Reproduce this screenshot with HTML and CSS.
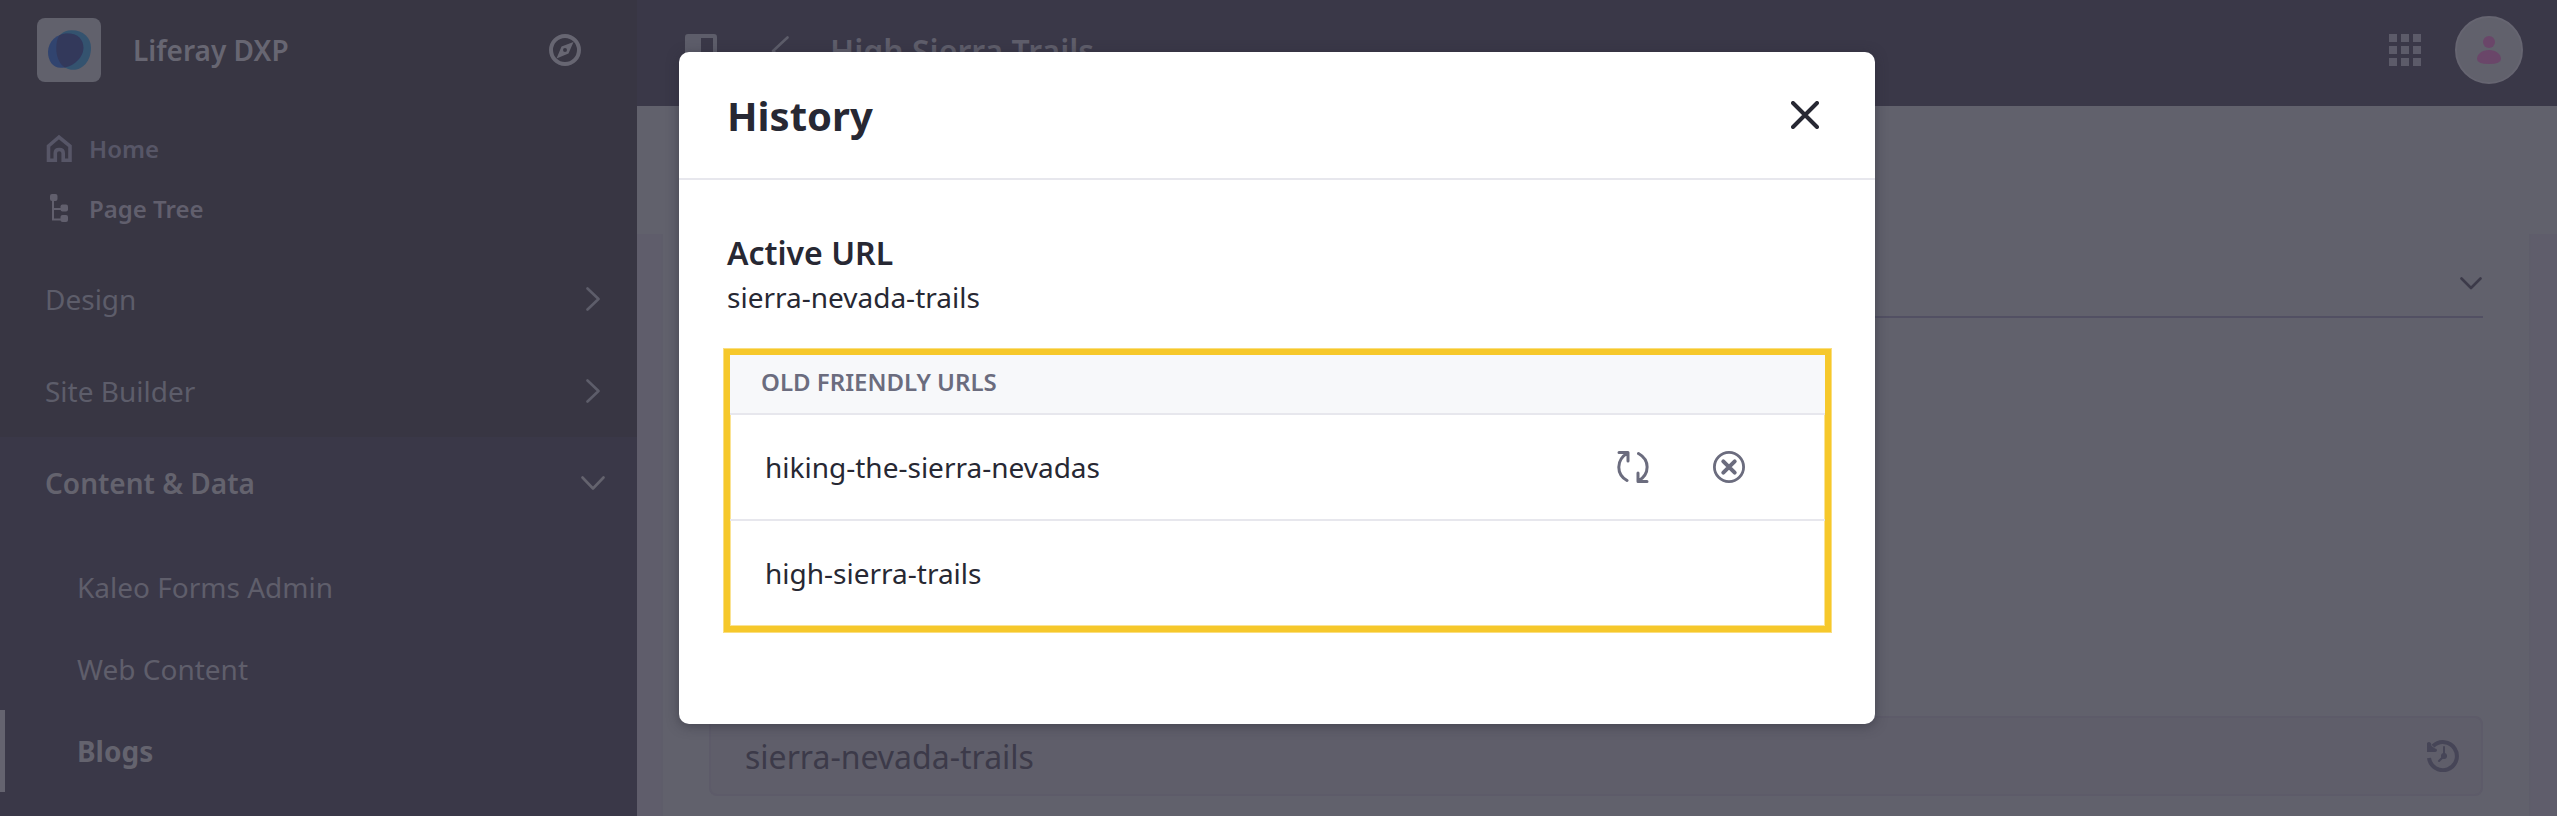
FILE: index.html
```html
<!DOCTYPE html>
<html lang="en">
<head>
<meta charset="utf-8">
<title>Liferay DXP</title>
<link rel="stylesheet" href="styles.css">
</head>
<body>
<div class="app">
  <aside class="sidebar">
    <div class="brand">
      <span class="brand-logo">
        <svg width="43" height="40" viewBox="0 0 130 120"><path class="blob-teal" d="M72 0C106 0 130 22 130 53C130 92 106 120 75 120C45 120 25 88 25 54C25 20 40 0 72 0Z"/><path class="blob-blue" d="M60 10C90 10 107 28 107 54C107 84 74 114 38 114C14 114 0 92 0 66C0 34 26 10 60 10Z"/><path class="blob-mix" d="M34 16C42 12 50 10 60 10C90 10 107 28 107 54C107 80 82 106 51 113C34 102 25 80 25 54C25 38 28 25 34 16Z"/></svg>
      </span>
      <span class="brand-name">Liferay DXP</span>
      <svg class="compass" width="32" height="32" viewBox="0 0 32 32"><circle cx="16" cy="16" r="14" fill="none" stroke="currentColor" stroke-width="4"/><path fill="currentColor" fill-rule="evenodd" d="M24.500 8L12.500 12.500L7.500 24.500L19.500 19.500ZM16 14a2 2 0 1 1 0 4a2 2 0 1 1 0-4Z"/></svg>
    </div>
    <nav class="quick">
      <a class="quick-link home"><svg width="26" height="28" viewBox="0 0 26 28" fill="none" stroke="currentColor" stroke-width="3.600" stroke-linejoin="round"><path stroke-linejoin="miter" d="M2.500 12L13 3L24 12V26.200H17.200V19Q17.200 15.500 13.200 15.500Q9.300 15.500 9.300 19V26.200H2.500Z"/></svg><span>Home</span></a>
      <a class="quick-link"><svg width="26" height="28" viewBox="0 0 26 28"><path d="M7 4V25.500H17M7 15H17" fill="none" stroke="currentColor" stroke-width="2"/><g fill="currentColor"><rect x="4" width="7.500" height="7" rx="2"/><rect x="14.500" y="10.500" width="7.500" height="7" rx="2"/><rect x="14.500" y="21" width="7.500" height="7" rx="2"/></g></svg><span>Page Tree</span></a>
    </nav>
    <nav class="groups">
      <a class="group"><span>Design</span><svg width="14" height="24" viewBox="0 0 14 24"><path class="line" d="M1.500 1.500L12.500 12L1.500 22.500"/></svg></a>
      <a class="group"><span>Site Builder</span><svg width="14" height="24" viewBox="0 0 14 24"><path class="line" d="M1.500 1.500L12.500 12L1.500 22.500"/></svg></a>
    </nav>
    <div class="expanded">
      <a class="group open"><span>Content &amp; Data</span><svg width="24" height="14" viewBox="0 0 24 14"><path class="line" d="M1.500 1.500L12 12.500L22.500 1.500"/></svg></a>
      <nav class="items">
        <a class="item">Kaleo Forms Admin</a>
        <a class="item">Web Content</a>
        <a class="item active">Blogs</a>
      </nav>
    </div>
  </aside>
  <div class="page">
    <header class="topbar">
      <svg class="panel-icon" width="32" height="32" viewBox="0 0 32 32"><path fill="currentColor" fill-rule="evenodd" d="M3 0H29Q32 0 32 3V29Q32 32 29 32H3Q0 32 0 29V3Q0 0 3 0ZM16 4V28H28V4Z"/></svg>
      <svg class="back" width="18" height="30" viewBox="0 0 18 30"><path class="line" d="M16.500 2.500L2 16L16.500 29"/></svg>
      <span class="page-title">High Sierra Trails</span>
      <svg class="apps" width="32" height="32" viewBox="0 0 32 32" fill="currentColor"><path d="M0 0h8v8H0zM12 0h8v8h-8zM24 0h8v8h-8zM0 12h8v8H0zM12 12h8v8h-8zM24 12h8v8h-8zM0 24h8v8H0zM12 24h8v8h-8zM24 24h8v8h-8z"/></svg>
      <span class="avatar"><svg width="24" height="28" viewBox="0 0 24 28" fill="currentColor"><circle cx="12" cy="6" r="6"/><path d="M12 14C19 14 24 18 24 23Q24 28 12 28Q0 28 0 23C0 18 5 14 12 14Z"/></svg></span>
    </header>
    <main class="content">
      <section class="sheet">
        <div class="section-head"><svg width="22" height="13" viewBox="0 0 22 13"><path class="line" d="M1.500 1.500L11 11L20.500 1.500"/></svg></div>
        <div class="url-field">
          <span>sierra-nevada-trails</span>
          <svg width="32" height="32" viewBox="0 0 32 32"><path d="M2 18A14 14 0 1 0 6 6.200" fill="none" stroke="currentColor" stroke-width="4"/><path fill="currentColor" d="M0 3.500Q0 2 2 2Q3.500 2 4 3.500L4.500 6L8 8.500Q10 8.500 10 10.200Q10 12 8 12H0Z"/><path d="M17 7V16L12 21" fill="none" stroke="currentColor" stroke-width="2" stroke-linecap="round"/><circle cx="17" cy="16" r="3" fill="currentColor"/></svg>
        </div>
      </section>
    </main>
  </div>
</div>
<div class="modal" role="dialog">
  <header class="modal-header">
    <h1>History</h1>
    <svg width="28" height="28" viewBox="0 0 28 28"><path d="M2 2L26 26M26 2L2 26" stroke="currentColor" stroke-width="4" stroke-linecap="round"/></svg>
  </header>
  <div class="modal-body">
    <h2>Active URL</h2>
    <p class="active-url">sierra-nevada-trails</p>
    <div class="url-list">
      <div class="list-head">OLD FRIENDLY URLS</div>
      <div class="list-row">
        <span>hiking-the-sierra-nevadas</span>
        <span class="actions">
          <svg width="32" height="32" viewBox="0 0 32 32" fill="none" stroke="currentColor" stroke-width="3" stroke-linecap="round" stroke-linejoin="round"><path d="M2 1.500H11V10M10.500 2C-1 9-1 23 10 29.500M21.500 2.500C33 9 33 23 21.500 30M21 22V30.500H30"/></svg>
          <svg width="32" height="32" viewBox="0 0 32 32" fill="none" stroke="currentColor" stroke-linecap="round"><circle cx="16" cy="16" r="14.600" stroke-width="2.800"/><path d="M10.300 10.300L21.700 21.700M21.700 10.300L10.300 21.700" stroke-width="4"/></svg>
        </span>
      </div>
      <div class="list-row">
        <span>high-sierra-trails</span>
      </div>
    </div>
  </div>
</div>
</body>
</html>
```

FILE: styles.css
```css
* { box-sizing: border-box; }
body {
  margin: 0;
  height: 816px;
  overflow: hidden;
  font-family: "Noto Sans", "Open Sans", sans-serif;
  font-size: 28px;
  color: #272833;
}
svg { display: block; flex: none; }
.line { fill: none; stroke: currentColor; stroke-width: 2.6; stroke-linecap: round; stroke-linejoin: round; }
.app { display: flex; height: 816px; background: #61616c; }
.sidebar {
  width: 637px;
  flex: none;
  display: flex;
  flex-direction: column;
  background: #383643;
  color: #5d5d6a;
}
.brand { display: flex; align-items: center; height: 100px; padding: 0 56px 0 37px; color: #676672; }
.brand-logo {
  width: 64px;
  height: 64px;
  border-radius: 8px;
  background: #61616c;
  display: flex;
  align-items: center;
  justify-content: center;
}
.blob-teal { fill: #34536f; }
.blob-blue { fill: #31446f; }
.blob-mix { fill: #33395b; }
.brand-name { margin-left: 32px; font-weight: 600; font-size: 28px; }
.compass { margin-left: auto; }
.quick { padding: 18px 0 0 46px; display: flex; flex-direction: column; }
.quick-link { display: flex; align-items: center; gap: 17px; height: 60px; font-size: 24px; font-weight: 600; color: #615f6d; }
.quick-link.home { color: #575667; }
.groups { padding-top: 15px; }
.group { display: flex; align-items: center; justify-content: space-between; height: 92px; padding: 0 37px 0 45px; }
.expanded { flex: 1; background: #3a3848; }
.group.open { padding-right: 32px; font-weight: 600; color: #64636e; }
.items { padding-top: 17px; }
.item { display: flex; align-items: center; height: 82px; padding-left: 77px; color: #5f5e6b; }
.item.active { padding-left: 73px; border-left: 5px solid #64636f; padding-left: 72px; font-weight: 700; color: #64636e; }
.page { flex: 1; display: flex; flex-direction: column; min-width: 0; }
.topbar {
  height: 106px;
  display: flex;
  align-items: center;
  padding: 0 34px 6px 48px;
  background: #3a3848;
  color: #5d5d6a;
}
.back { margin-left: 54px; }
.page-title { margin-left: 41px; font-size: 32px; font-weight: 600; color: #5f5e6b; }
.apps { margin-left: auto; color: #5c5b69; }
.avatar {
  margin-left: 34px;
  width: 68px;
  height: 68px;
  border-radius: 50%;
  border: 2px solid #666571;
  background: #61616c;
  color: #6a4669;
  display: flex;
  align-items: center;
  justify-content: center;
}
.content { flex: 1; margin-top: 128px; padding: 0 26px 0 24px; display: flex; background: #5f5d6b; }
.sheet { flex: 1; padding: 0 46px; border: solid #5e5d6a; border-width: 0 2px; background: #61616c; }
.section-head { height: 84px; display: flex; justify-content: flex-end; padding: 43px 1px 0 0; border-bottom: 2px solid #525063; color: #3c3a49; }
.url-field {
  margin-top: 398px;
  height: 80px;
  display: flex;
  align-items: center;
  justify-content: space-between;
  padding: 0 22px 0 34px;
  border: 2px solid #5d5b69;
  border-radius: 8px;
  background: #5f5e6a;
  font-size: 32px;
  color: #3c3a49;
}
.url-field svg { color: #464557; }
.modal {
  position: absolute;
  left: 679px;
  top: 52px;
  width: 1196px;
  height: 672px;
  border-radius: 10px;
  background: #fff;
  box-shadow: 0 2px 12px rgba(39, 40, 51, 0.5);
}
.modal-header { height: 128px; display: flex; align-items: center; justify-content: space-between; padding: 0 56px 0 48px; border-bottom: 2px solid #e7e7ed; }
h1 { margin: 0; font-size: 40px; font-weight: 700; }
h2 { margin: 0; font-size: 32px; line-height: 48px; font-weight: 600; }
.modal-body { padding: 49px 44px 0 48px; }
.active-url { margin: 0; line-height: 40px; }
.url-list {
  margin: 32px 0 0 -3px;
  width: 1107px;
  height: 283px;
  border: 6px solid #f6c82b;
  box-shadow: 0 0 0 1px rgba(246, 200, 43, 0.6), inset 0 0 0 1px rgba(246, 200, 43, 0.5);
}
.list-head { height: 60px; padding: 8px 31px 0; border-bottom: 2px solid #e7e7ed; background: #f7f8fa; font-size: 24px; font-weight: 600; line-height: 38px; color: #6b6c7e; }
.list-row { height: 106px; display: flex; align-items: center; justify-content: space-between; padding: 0 80px 0 35px; border-bottom: 2px solid #e7e7ed; }
.list-row:last-child { border-bottom: 0; height: 105px; padding-bottom: 1px; }
.actions { display: flex; gap: 64px; color: #6b6c7e; }
```
